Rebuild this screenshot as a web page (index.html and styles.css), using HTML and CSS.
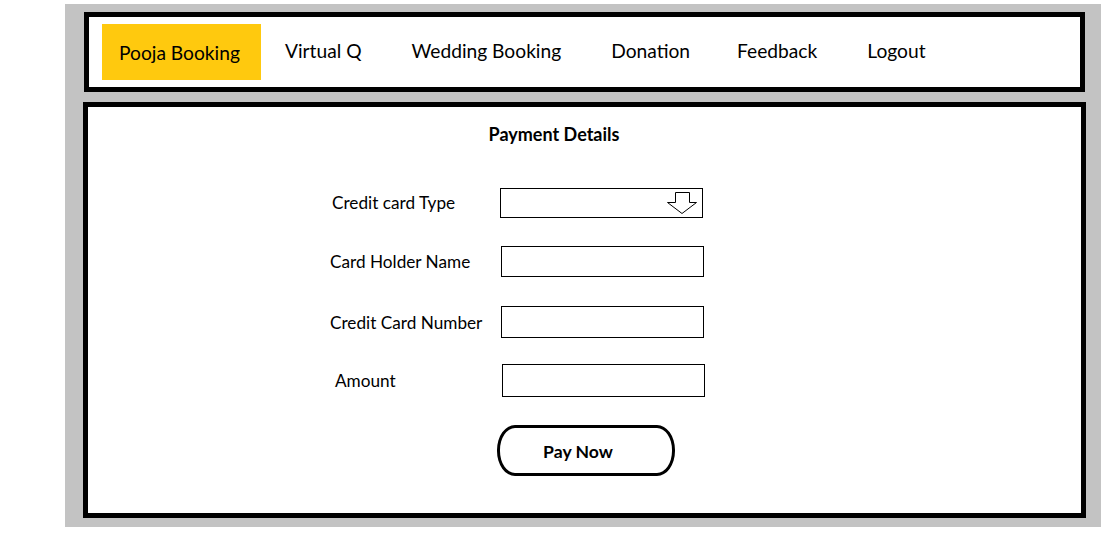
FILE: index.html
```html
<!DOCTYPE html>
<html>
<head>
<meta charset="utf-8">
<link rel="stylesheet" href="styles.css">
</head>
<body>
<div class="frame">
  <nav class="nav">
    <a class="nav-item active">Pooja Booking</a>
    <a class="nav-item">Virtual Q</a>
    <a class="nav-item">Wedding Booking</a>
    <a class="nav-item">Donation</a>
    <a class="nav-item tight">Feedback</a>
    <a class="nav-item">Logout</a>
  </nav>
  <main class="panel">
    <h1 class="title">Payment Details</h1>
    <div class="form">
      <div class="row r1">
        <label class="label l1">Credit card Type</label>
        <div class="field select">
          <svg class="arrow" width="31" height="23" viewBox="0 0 31 23">
            <polygon points="8.5,0.5 22.5,0.5 22.5,10.5 29.5,10.5 15,21.5 0.5,10.5 8.5,10.5" fill="#fff" stroke="#000" stroke-width="1"/>
          </svg>
        </div>
      </div>
      <div class="row r2">
        <label class="label">Card Holder Name</label>
        <div class="field"></div>
      </div>
      <div class="row r3">
        <label class="label">Credit Card Number</label>
        <div class="field"></div>
      </div>
      <div class="row r4">
        <label class="label l4">Amount</label>
        <div class="field"></div>
      </div>
      <div class="row r5">
        <button class="pay">Pay Now</button>
      </div>
    </div>
  </main>
</div>
</body>
</html>
```
FILE: styles.css
```css
html, body {
  margin: 0;
  padding: 0;
  background: #fff;
}
body {
  font-family: Lato, "Open Sans", sans-serif;
  color: #000;
}
.frame {
  margin: 4px 0 0 65px;
  width: 1036px;
  height: 523px;
  background: #c3c3c3;
  padding-top: 8px;
  box-sizing: border-box;
}
.nav {
  margin-left: 19px;
  width: 1001px;
  height: 80px;
  border: 5px solid #000;
  box-sizing: border-box;
  background: #fff;
  display: flex;
  align-items: center;
  padding-left: 13px;
  gap: 50px;
}
.nav-item {
  font-size: 19.2px;
  line-height: 24px;
  color: #000;
  white-space: nowrap;
  margin-top: -3px;
}
.nav-item.tight { margin-left: -3px; }
.nav-item.active {
  background: #ffc90e;
  height: 56px;
  box-sizing: border-box;
  padding: 17px 18px 0 17px;
  width: 159px;
  margin-top: 0;
  margin-right: -26px;
}
.panel {
  display: block;
  margin: 10px 0 0 18px;
  width: 1003px;
  height: 416px;
  border: 5px solid #000;
  box-sizing: border-box;
  background: #fff;
}
.title {
  margin: 17px 0 0 0;
  padding-right: 61px;
  text-align: center;
  font-size: 18px;
  line-height: 20px;
  font-weight: bold;
}
.form {
  display: flex;
  flex-direction: column;
  margin: 44px 0 0 242px;
}
.row {
  display: flex;
  align-items: center;
}
.r2 { margin-top: 28px; }
.r3 { margin-top: 29px; }
.r4 { margin-top: 26px; }
.r5 { margin-top: 28px; padding-left: 167px; }
.label {
  width: 171px;
  font-size: 17.2px;
  line-height: 20px;
}
.l1 { padding-left: 2px; box-sizing: border-box; }
.l4 { padding-left: 5px; box-sizing: border-box; }
.r3 .label { margin-top: 1px; }
.field {
  width: 203px;
  height: 31px;
  border: 1px solid #000;
  box-sizing: border-box;
}
.r3 .field { height: 32px; }
.r4 .field { height: 33px; margin-left: 1px; }
.select {
  height: 30px;
  margin-left: -1px;
  display: flex;
  justify-content: flex-end;
  align-items: center;
  padding-right: 4px;
}
.arrow { display: block; }
.pay {
  width: 178px;
  height: 51px;
  border: 3px solid #000;
  border-radius: 18px / 25px;
  background: #fff;
  font-family: Lato, "Open Sans", sans-serif;
  font-size: 17.6px;
  font-weight: bold;
  color: #000;
  padding: 2px 16px 0 0;
}
```
